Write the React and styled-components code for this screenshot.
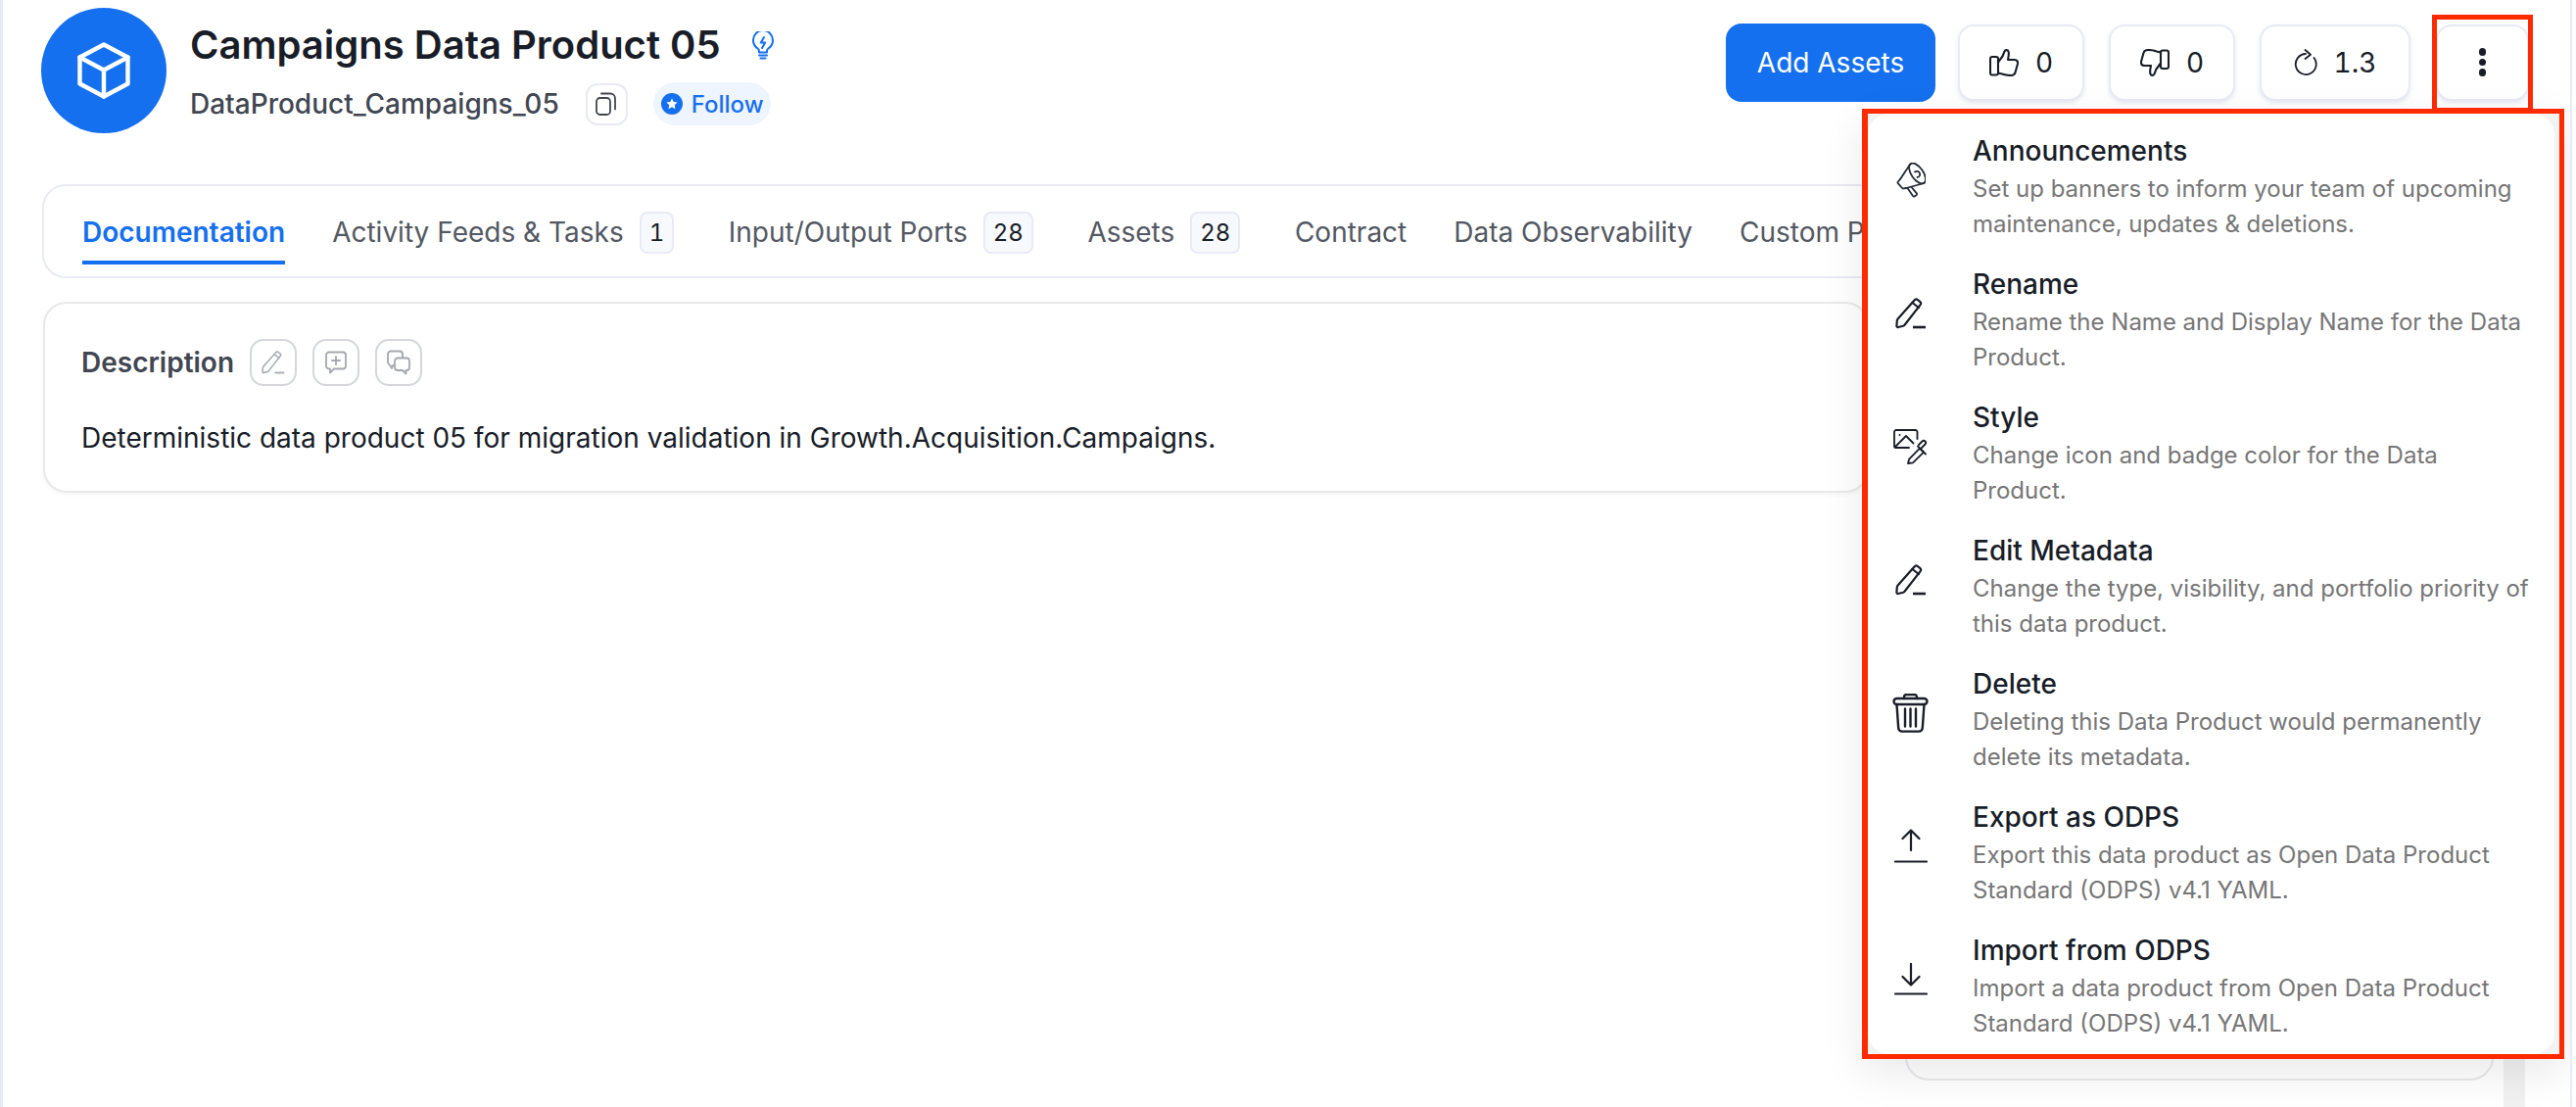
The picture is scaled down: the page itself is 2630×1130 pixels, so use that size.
import React from "react";
import styled, { createGlobalStyle } from "styled-components";

const GlobalStyle = createGlobalStyle`
  html, body {
    margin: 0;
    padding: 0;
    background: #fff;
  }
  * {
    box-sizing: border-box;
  }
  body {
    font-family: Inter, "Liberation Sans", sans-serif;
    color: #181d27;
  }
`;

const Page = styled.div`
  position: relative;
  width: 2626px;
  height: 1130px;
  overflow: hidden;
  background: #fff;
  border-left: 3px solid #e9eaf8;
  border-right: 2px solid #e9eaf8;
  padding: 8px 42px 0 39px;
`;

// header
const Header = styled.header`
  display: flex;
  justify-content: space-between;
  height: 128px;
`;
const Identity = styled.div`
  display: flex;
  align-items: flex-start;
  gap: 24px;
`;
const Avatar = styled.div`
  width: 128px;
  height: 128px;
  border-radius: 50%;
  background: #1570ef;
  display: flex;
  align-items: center;
  justify-content: center;
`;
const Names = styled.div`
  display: flex;
  flex-direction: column;
  gap: 13px;
  padding-top: 13px;
`;
const TitleRow = styled.div`
  display: flex;
  align-items: center;
  gap: 31px;
  height: 50px;
`;
const Title = styled.h1`
  margin: 0;
  font-size: 40px;
  line-height: 50px;
  font-weight: 600;
  color: #181d27;
`;
const SubRow = styled.div`
  display: flex;
  align-items: center;
  height: 44px;
`;
const SubName = styled.span`
  font-size: 28px;
  font-weight: 500;
  color: #414651;
`;
const CopyBtn = styled.button`
  width: 43px;
  height: 43px;
  margin: 0 26px 0 27px;
  padding: 0;
  background: #fff;
  border: 2px solid #e9eaf5;
  border-radius: 12px;
  display: flex;
  align-items: center;
  justify-content: center;
`;
const FollowBtn = styled.button`
  height: 44px;
  width: 120px;
  padding: 0 0 0 8px;
  display: flex;
  align-items: center;
  gap: 9px;
  background: #eff5ff;
  border: none;
  border-radius: 22px;
  font: 500 24px Inter, sans-serif;
  color: #1570ef;
`;
const Actions = styled.div`
  display: flex;
  align-items: center;
  gap: 25px;
  height: 111px;
`;
const PrimaryBtn = styled.button`
  width: 214px;
  height: 80px;
  margin-right: -2px;
  border: none;
  border-radius: 16px;
  background: #1570ef;
  color: #fff;
  font: 400 28px Inter, sans-serif;
`;
const StatBtn = styled.button`
  width: ${(p) => p.$w}px;
  height: 78px;
  padding: 0;
  display: flex;
  align-items: center;
  justify-content: center;
  gap: 17px;
  background: #fff;
  border: 2px solid #e9eaf5;
  border-radius: 16px;
  box-shadow: 0 2px 4px rgba(80, 90, 160, 0.14);
  font: 400 28px Inter, sans-serif;
  font-variant-numeric: tabular-nums;
  color: #181d27;
`;
const MoreBtn = styled(StatBtn)`
  margin-left: 1px;
`;
const Dots = styled.span`
  display: flex;
  flex-direction: column;
  gap: 3px;
  > i {
    width: 7.5px;
    height: 7.5px;
    border-radius: 50%;
    background: #181d27;
  }
`;

// tabs
const TabCard = styled.nav`
  display: flex;
  align-items: stretch;
  gap: 48px;
  height: 96px;
  margin: 52px 0 24px 1px;
  padding-left: 39px;
  background: #fff;
  border: 2px solid #e9eaf5;
  border-radius: 24px;
  overflow: hidden;
`;
const Tab = styled.div`
  display: flex;
  align-items: center;
  height: 80px;
  padding-top: 18px;
  white-space: nowrap;
  font-size: 28px;
  font-weight: ${(p) => (p.$active ? 600 : 400)};
  color: ${(p) => (p.$active ? "#1570ef" : "#535862")};
  border-bottom: 4px solid ${(p) => (p.$active ? "#1570ef" : "transparent")};
`;
const Count = styled.span`
  display: flex;
  align-items: center;
  justify-content: center;
  height: 43px;
  padding: 0 8px;
  margin: 0 7.5px 0 16px;
  background: #f8f9fc;
  border: 2px solid #e9eaf5;
  border-radius: 8px;
  font-size: 24px;
  font-variant-numeric: tabular-nums;
  color: #181d27;
`;

// body
const Columns = styled.div`
  display: flex;
  align-items: flex-start;
`;
const DescCard = styled.section`
  width: 1864px;
  height: 195px;
  flex: none;
  margin-left: 2px;
  padding: 36px 37px;
  background: #fff;
  border: 2px solid #e9e9eb;
  border-radius: 24px;
  box-shadow: 0 2px 4px rgba(10, 13, 18, 0.04);
`;
const DescHead = styled.div`
  display: flex;
  align-items: center;
  gap: 16px;
  height: 48px;
  margin-bottom: 33px;
`;
const DescTitle = styled.h2`
  margin: 0;
  font-size: 28px;
  font-weight: 600;
  color: #414651;
`;
const SmallBtn = styled.button`
  width: 48px;
  height: 48px;
  padding: 0;
  display: flex;
  align-items: center;
  justify-content: center;
  background: #fff;
  border: 2px solid #d5d7da;
  border-radius: 14px;
`;
const DescText = styled.p`
  margin: 0;
  font-size: 28px;
  line-height: 40px;
  color: #181d27;
`;
const SideCard = styled.aside`
  width: 601px;
  height: 795px;
  margin-left: 37px;
  flex: none;
  border: 2px solid #e9e9eb;
  border-radius: 24px;
`;
const Scrollbar = styled.div`
  width: 22px;
  height: 900px;
  margin-left: 10px;
  flex: none;
  background: #f1f1f1;
`;

// red annotation boxes over the screenshot
const MoreHighlight = styled.div`
  position: absolute;
  left: 2480px;
  top: 15px;
  width: 103px;
  height: 100px;
  border: 5px solid #ff2b00;
  pointer-events: none;
`;
const MenuHighlight = styled.div`
  position: absolute;
  left: 1898px;
  top: 111px;
  width: 717px;
  height: 970px;
  border: 5px solid #ff2b00;
  border-left-width: 6px;
  padding-right: 5px;
  background: #f3f3f3;
  box-shadow: 0 14px 40px rgba(10, 13, 18, 0.09);
`;
const MenuPanel = styled.div`
  height: 100%;
  padding-top: 8px;
  background: #fff;
  border-radius: 22px;
`;
const MenuItem = styled.div`
  display: flex;
  align-items: center;
  height: 136px;
  padding: 12px 24px 13px 25px;
`;
const ItemIcon = styled.div`
  flex: none;
  width: 37px;
  margin: 0 45px 16px 0;
  display: flex;
  justify-content: center;
`;
const ItemName = styled.div`
  font-size: 28px;
  line-height: 36px;
  font-weight: 500;
  color: #181d27;
  margin-bottom: 3px;
`;
const ItemDesc = styled.div`
  font-size: 24px;
  line-height: 36px;
  color: #767676;
`;

const Cube = () => (
  <svg width="54" height="58" viewBox="0 0 54 58" fill="none" stroke="#fff" strokeWidth="4.4" strokeLinejoin="round" strokeLinecap="round">
    <path d="M27 2.5L51.5 15.5V42.5L27 55.5L2.5 42.5V15.5Z" />
    <path d="M2.5 15.5L27 28.5L51.5 15.5M27 28.5V55.5" />
  </svg>
);

const Bulb = () => (
  <svg width="24" height="29" viewBox="0 0 24 29" fill="none" stroke="#1570ef" strokeWidth="2" strokeLinecap="round" strokeLinejoin="round">
    <path d="M8 21.5v-1.6c0-1-.6-1.8-1.4-2.4A10 10 0 1 1 17.4 17.5c-.8.6-1.4 1.4-1.4 2.4v1.6z" />
    <path d="M13 6l-3.2 5.6h4.4L11 17" />
    <path d="M8 24.5h8M9.5 27.5h5" />
  </svg>
);

const Copy = () => (
  <svg width="22" height="24" viewBox="0 0 22 24" fill="none" stroke="#414651" strokeWidth="1.8" strokeLinecap="round">
    <rect x="1" y="6" width="14" height="17" rx="3.5" />
    <path d="M6 1.5h9a5 5 0 0 1 5 5v11" />
  </svg>
);

const FollowStar = () => (
  <svg width="22" height="22" viewBox="0 0 22 22">
    <circle cx="11" cy="11" r="11" fill="#1570ef" />
    <path d="M11 5.5l1.7 3.6 3.9.5-2.9 2.7.8 3.9-3.5-2-3.5 2 .8-3.9-2.9-2.7 3.9-.5z" fill="#fff" />
  </svg>
);

const Thumb = ({ down }) => (
  <svg
    width="30"
    height="28"
    viewBox="0 0 30 28"
    fill="none"
    stroke="#181d27"
    strokeWidth="2.1"
    strokeLinecap="round"
    strokeLinejoin="round"
    transform={down ? "rotate(180)" : undefined}
  >
    <rect x="1" y="8" width="8" height="18.5" rx="2" />
    <path d="M9 13.5L13.5 7.5C14.5 5.5 15 3.5 15.5 2.5C16.2 .5 19.3 .7 19.7 3C20.2 5.5 19.5 8.5 19 11H26C28 11 29.5 13 29 15L26.5 24C26 26 24 27 22 27C19 27 16 26.5 13 25.5L9 24.5" />
  </svg>
);

const Rotate = () => (
  <svg width="24" height="27" viewBox="0 0 24 27" fill="none" stroke="#181d27" strokeWidth="1.8" strokeLinecap="round" strokeLinejoin="round">
    <path d="M12 5A10.5 10.5 0 1 0 20.5 9" />
    <path d="M11.5 1l5.5 4.7-5.5 4.3" />
  </svg>
);

const Pencil = ({ color = "#181d27", size = 32, sw = 2.2 }) => (
  <svg width={size} height={size} viewBox="0 0 32 32" fill="none" stroke={color} strokeWidth={sw} strokeLinecap="round" strokeLinejoin="round">
    <path d="M19.5 2.5a2.4 2.4 0 0 1 3.3-.5l2.4 1.9a2.4 2.4 0 0 1 .4 3.3L9.5 27.8a3 3 0 0 1-1.5 1L3 30a1.3 1.3 0 0 1-1.6-1.3l.4-5.3a3 3 0 0 1 .6-1.6z" />
    <path d="M17.5 5l6.4 5" />
    <path d="M18 30h13" strokeWidth={sw + 0.4} strokeLinecap="butt" />
  </svg>
);

const Megaphone = () => (
  <svg width="30" height="36" viewBox="0 0 30 36" fill="none" stroke="#252b37" strokeWidth="1.8" strokeLinecap="round" strokeLinejoin="round">
    <ellipse cx="21.5" cy="11" rx="6" ry="12" transform="rotate(-35 21.5 11)" />
    <path d="M14.5 1.2L4.3 16.5M28.5 21L10 26" />
    <path d="M4.3 16.5L1.8 19.5a1.3 1.3 0 0 0 0 1.7l4.3 4.8a1.3 1.3 0 0 0 1.4.4L10 26" />
    <path d="M11.5 26l5.500 8a1.3 1.3 0 0 0 1.8.3l1.7-1.100a1.3 1.3 0 0 0 .4-1.800L15.5 25" />
    <path d="M19 9.500a3.200 3.200 0 0 1 5 1.500 3 3 0 0 1-2.500 4" />
  </svg>
);

const StyleIcon = () => (
  <svg width="36" height="36" viewBox="0 0 36 36" fill="none" stroke="#181d27" strokeWidth="1.8" strokeLinecap="round" strokeLinejoin="round">
    <path d="M24.5 10V3a2 2 0 0 0-2-2H3a2 2 0 0 0-2 2v14a2 2 0 0 0 2 2h13" />
    <circle cx="6.5" cy="6" r="1" fill="#181d27" stroke="none" />
    <path d="M1.5 18.5L13 7l7.5 7.5" />
    <path d="M15 35l1.2-4.4L27 19.6l4 4L20 34.4 15.2 35z" />
    <path d="M25 17.5l8 8M29 19l3.5-3.5a2 2 0 0 0-3-3L26 16" />
  </svg>
);

const Trash = () => (
  <svg width="37" height="40" viewBox="0 0 37 40" fill="none" stroke="#181d27" strokeWidth="2.4" strokeLinecap="round" strokeLinejoin="round">
    <path d="M12 5V3.5A2.5 2.5 0 0 1 14.5 1h8A2.5 2.5 0 0 1 25 3.5V5" />
    <rect x="1.5" y="5" width="34" height="6" rx="3" />
    <path d="M4.5 11l1.7 24a4 4 0 0 0 4 3.6h16.6a4 4 0 0 0 4-3.6L32.5 11" />
    <path d="M13 15.5v18M18.5 15.5v18M24 15.5v18" />
  </svg>
);

const ArrowUp = () => (
  <svg width="34" height="35" viewBox="0 0 34 35" fill="none" stroke="#181d27" strokeWidth="2.2" strokeLinecap="round" strokeLinejoin="round">
    <path d="M17 22V1.5M8.5 10L17 1.5l8.5 8.5" />
    <path d="M1 33.5h32" />
  </svg>
);

const ArrowDown = () => (
  <svg width="34" height="33" viewBox="0 0 34 33" fill="none" stroke="#181d27" strokeWidth="2.2" strokeLinecap="round" strokeLinejoin="round">
    <path d="M17 1v21.5M8.5 14l8.5 8.5 8.5-8.5" />
    <path d="M1 31.5h32" />
  </svg>
);

const CommentPlus = () => (
  <svg width="22" height="24" viewBox="0 0 22 24" fill="none" stroke="#a4a7ae" strokeWidth="1.8" strokeLinecap="round" strokeLinejoin="round">
    <path d="M4 1.5h14a3 3 0 0 1 3 3v11a3 3 0 0 1-3 3h-9l-4 4v-4H4a3 3 0 0 1-3-3v-11a3 3 0 0 1 3-3z" />
    <path d="M11 6v8M7 10h8" />
  </svg>
);

const Comments = () => (
  <svg width="24" height="26" viewBox="0 0 24 26" fill="none" stroke="#a4a7ae" strokeWidth="1.8" strokeLinecap="round" strokeLinejoin="round">
    <path d="M8 16H6l-1 3-2-3.5A3 3 0 0 1 1 13V4.5a3 3 0 0 1 3-3h9a3 3 0 0 1 3 3V8" />
    <path d="M11 8.5h9a3 3 0 0 1 3 3V18a3 3 0 0 1-3 3h-.5v3.500L16 21h-5a3 3 0 0 1-3-3v-6.500a3 3 0 0 1 3-3z" />
  </svg>
);

const tabs = [
  { label: "Documentation", active: true },
  { label: "Activity Feeds & Tasks", count: 1 },
  { label: "Input/Output Ports", count: 28 },
  { label: "Assets", count: 28 },
  { label: "Contract" },
  { label: "Data Observability" },
  { label: "Custom Properties" },
];

const menu = [
  { icon: <Megaphone />, name: "Announcements", desc: "Set up banners to inform your team of upcoming maintenance, updates & deletions." },
  { icon: <Pencil />, name: "Rename", desc: "Rename the Name and Display Name for the Data Product." },
  { icon: <StyleIcon />, name: "Style", desc: "Change icon and badge color for the Data Product." },
  { icon: <Pencil />, name: "Edit Metadata", desc: "Change the type, visibility, and portfolio priority of this data product." },
  { icon: <Trash />, name: "Delete", desc: "Deleting this Data Product would permanently delete its metadata." },
  { icon: <ArrowUp />, name: "Export as ODPS", desc: "Export this data product as Open Data Product Standard (ODPS) v4.1 YAML." },
  { icon: <ArrowDown />, name: "Import from ODPS", desc: "Import a data product from Open Data Product Standard (ODPS) v4.1 YAML." },
];

const App = () => {
  return (
    <Page>
      <GlobalStyle />
      <Header>
        <Identity>
          <Avatar>
            <Cube />
          </Avatar>
          <Names>
            <TitleRow>
              <Title>Campaigns Data Product 05</Title>
              <Bulb />
            </TitleRow>
            <SubRow>
              <SubName>DataProduct_Campaigns_05</SubName>
              <CopyBtn>
                <Copy />
              </CopyBtn>
              <FollowBtn>
                <FollowStar />
                Follow
              </FollowBtn>
            </SubRow>
          </Names>
        </Identity>
        <Actions>
          <PrimaryBtn>Add Assets</PrimaryBtn>
          <StatBtn $w={129}>
            <Thumb />0
          </StatBtn>
          <StatBtn $w={129}>
            <Thumb down />0
          </StatBtn>
          <StatBtn $w={154}>
            <Rotate />
            1.3
          </StatBtn>
          <MoreBtn $w={95}>
            <Dots>
              <i />
              <i />
              <i />
            </Dots>
          </MoreBtn>
        </Actions>
      </Header>

      <TabCard>
        {tabs.map((t) => (
          <Tab key={t.label} $active={t.active}>
            {t.label}
            {t.count !== undefined && <Count>{t.count}</Count>}
          </Tab>
        ))}
      </TabCard>

      <Columns>
        <DescCard>
          <DescHead>
            <DescTitle>Description</DescTitle>
            <SmallBtn>
              <Pencil color="#a4a7ae" size={24} sw={2} />
            </SmallBtn>
            <SmallBtn>
              <CommentPlus />
            </SmallBtn>
            <SmallBtn>
              <Comments />
            </SmallBtn>
          </DescHead>
          <DescText>Deterministic data product 05 for migration validation in Growth.Acquisition.Campaigns.</DescText>
        </DescCard>
        <SideCard />
        <Scrollbar />
      </Columns>

      <MoreHighlight />
      <MenuHighlight>
        <MenuPanel>
          {menu.map((m) => (
            <MenuItem key={m.name}>
              <ItemIcon>{m.icon}</ItemIcon>
              <div>
                <ItemName>{m.name}</ItemName>
                <ItemDesc>{m.desc}</ItemDesc>
              </div>
            </MenuItem>
          ))}
        </MenuPanel>
      </MenuHighlight>
    </Page>
  );
};

export default App;
